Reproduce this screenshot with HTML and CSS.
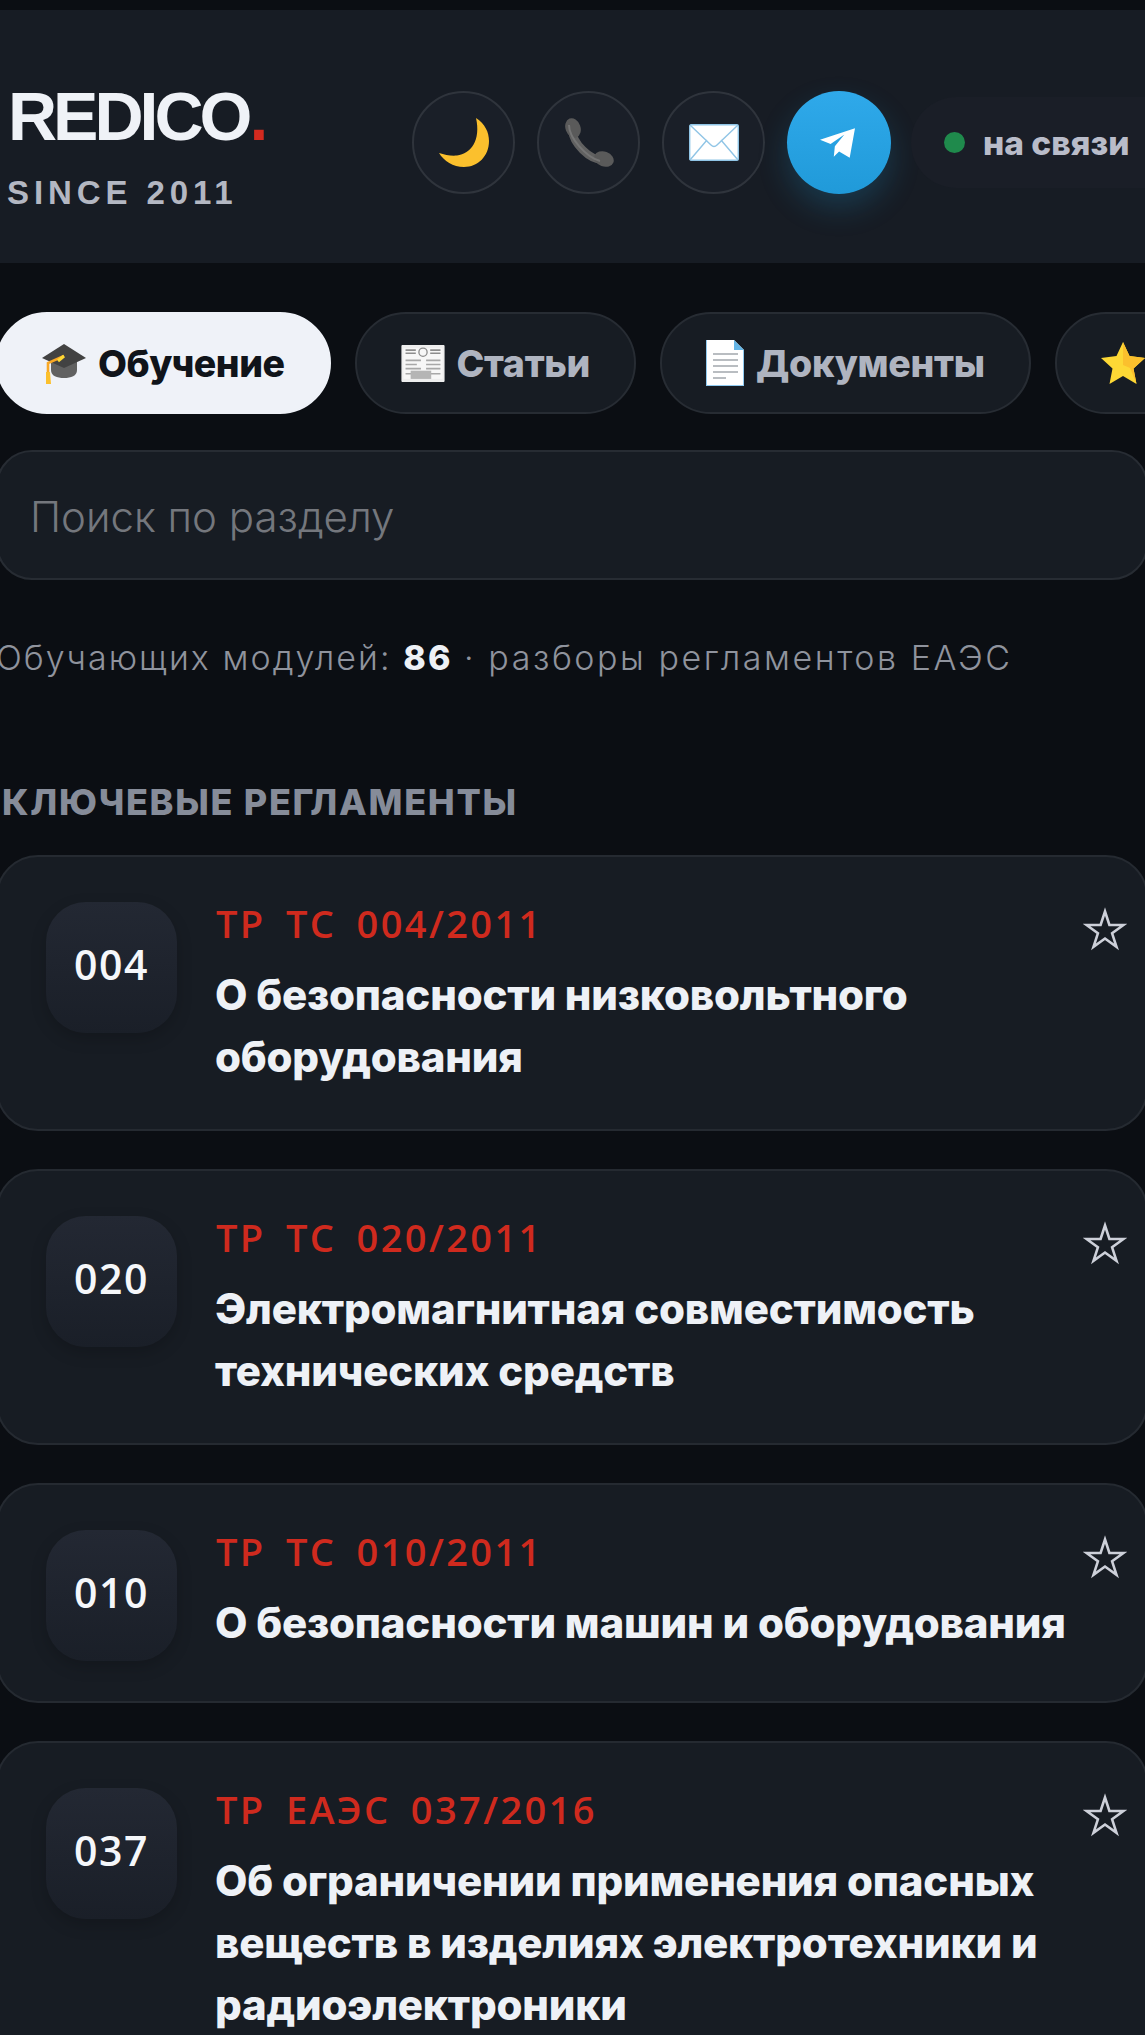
FILE: index.html
```html
<!DOCTYPE html>
<html lang="ru">
<head>
    <meta charset="UTF-8">
    <meta name="viewport" content="width=device-width, initial-scale=1.0">
    <title>REDICO</title>
    <link rel="stylesheet" href="styles.css">
</head>
<body>
    <div class="page">
        <header class="topbar">
            <div class="brand">
                <div class="logo">REDICO<span class="logo-dot">.</span></div>
                <div class="since">SINCE 2011</div>
            </div>
            <div class="actions">
                <button class="round-btn">
                    <svg width="50" height="49" viewBox="0 0 50 49"><path d="M37 0C46 6 50 14 50 23C50 38 39 49 25 49C14 49 5 43 0 35C6 37 12 38 18 37.500C32 36 42 22 37 0Z" fill="#fbc02d"/></svg>
                </button>
                <button class="round-btn">
                    <svg width="50" height="50" viewBox="0 0 50 50"><path d="M8 12C9 25 25 42 39 42" fill="none" stroke="#616161" stroke-width="8"/><ellipse cx="9" cy="10" rx="7.500" ry="10" transform="rotate(-20 9 10)" fill="#5a5a5a"/><ellipse cx="40" cy="41" rx="10" ry="7.500" transform="rotate(20 40 41)" fill="#5a5a5a"/><path d="M5 7C5 20 22 39 36 43" fill="none" stroke="#757575" stroke-width="2"/></svg>
                </button>
                <button class="round-btn">
                    <svg width="50" height="37" viewBox="0 0 50 37"><rect x="0.700" y="0.700" width="48.600" height="35.600" rx="1.500" fill="#ffffff" stroke="#90c5e6" stroke-width="1.400"/><path d="M1 1L22 21Q25 24 28 21L49 1M1 36L18 16M49 36L32 16" fill="none" stroke="#90c5e6" stroke-width="1.400"/></svg>
                </button>
                <button class="round-btn round-btn-tg">
                    <svg width="35" height="30" viewBox="0 0 33 28"><path d="M33 0L0 11L10 15L23 6L14 17L13 27L18 22L28 28Z" fill="#ffffff"/></svg>
                </button>
                <div class="status"><span class="status-dot"></span>на связи</div>
            </div>
        </header>

        <main class="content">
            <nav class="tabs">
                <a class="tab tab-active">
                    <svg width="44" height="44" viewBox="0 0 44 44"><path d="M9 18V29C9 35 15 37 22 37C29 37 35 35 35 29V18Z" fill="#616161"/><path d="M22 3L44 17L22 27L0 17Z" fill="#424242"/><path d="M22 15L6 22V32" fill="none" stroke="#f9a825" stroke-width="2.600"/><path d="M22 15L16 20" stroke="#fdd835" stroke-width="3"/><path d="M4 31H8L9 43H4Z" fill="#fbc02d"/></svg>
                    Обучение
                </a>
                <a class="tab">
                    <svg width="44" height="37" viewBox="0 0 42 36"><rect width="42" height="36" rx="1" fill="#eeeeee"/><rect x="2" y="3" width="38" height="30" fill="#f7f7f7"/><path d="M4 5H14M28 5H38M4 8H14M28 8H38" stroke="#8d8d8d" stroke-width="1.600"/><circle cx="21" cy="7" r="4" fill="none" stroke="#8d8d8d" stroke-width="1.300"/><path d="M4 15H19M4 19H15M4 23H19M24 15H38M24 19H38M24 23H38M4 28H10M24 28H38" stroke="#a8a8a8" stroke-width="1.600"/><rect x="9" y="25" width="20" height="8" fill="#b5b5b5"/></svg>
                    Статьи
                </a>
                <a class="tab">
                    <svg width="38" height="46" viewBox="0 0 38 46"><path d="M0 0H28L38 10V46H0Z" fill="#ffffff"/><path d="M28 0L38 10H28Z" fill="#64b5e6"/><path d="M0 0H1V45H37V10H38V46H0Z" fill="#90caf0"/><path d="M7 14H32M7 20H32M7 26H32M7 32H32M7 38H20" stroke="#a3a8ad" stroke-width="1.500"/></svg>
                    Документы
                </a>
                <a class="tab tab-cut">
                    <svg width="44" height="44" viewBox="0 0 44 44"><path d="M22 1L28.500 15L44 17L32.500 27.500L35.500 43L22 35L8.500 43L11.500 27.500L0 17L15.500 15Z" fill="#fdd835"/><path d="M22 1L28.500 15L44 17L32.500 27.500L35.500 43L29 27L22 24Z" fill="#fbc02d"/></svg>
                </a>
            </nav>

            <input class="search" type="text" placeholder="Поиск по разделу">

            <p class="summary">Обучающих модулей: <b>86</b> <span class="summary-tail">· разборы регламентов ЕАЭС</span></p>

            <h2 class="section-title">КЛЮЧЕВЫЕ РЕГЛАМЕНТЫ</h2>

            <div class="card-list">
                <article class="card">
                    <div class="card-num">004</div>
                    <div class="card-body">
                        <div class="card-code">ТР ТС 004/2011</div>
                        <div class="card-title">О безопасности низковольтного оборудования</div>
                    </div>
                    <svg class="card-star" viewBox="0 0 44 44"><path d="M22 4.500L26.400 18L40.500 18L29.100 26.300L33.500 39.800L22 31.500L10.500 39.800L14.900 26.300L3.500 18L17.600 18Z" fill="none" stroke="#cdd0d9" stroke-width="2.600" stroke-miterlimit="10"/></svg>
                </article>
                <article class="card">
                    <div class="card-num">020</div>
                    <div class="card-body">
                        <div class="card-code">ТР ТС 020/2011</div>
                        <div class="card-title">Электромагнитная совместимость технических средств</div>
                    </div>
                    <svg class="card-star" viewBox="0 0 44 44"><path d="M22 4.500L26.400 18L40.500 18L29.100 26.300L33.500 39.800L22 31.500L10.500 39.800L14.900 26.300L3.500 18L17.600 18Z" fill="none" stroke="#cdd0d9" stroke-width="2.600" stroke-miterlimit="10"/></svg>
                </article>
                <article class="card">
                    <div class="card-num">010</div>
                    <div class="card-body">
                        <div class="card-code">ТР ТС 010/2011</div>
                        <div class="card-title">О безопасности машин и оборудования</div>
                    </div>
                    <svg class="card-star" viewBox="0 0 44 44"><path d="M22 4.500L26.400 18L40.500 18L29.100 26.300L33.500 39.800L22 31.500L10.500 39.800L14.900 26.300L3.500 18L17.600 18Z" fill="none" stroke="#cdd0d9" stroke-width="2.600" stroke-miterlimit="10"/></svg>
                </article>
                <article class="card">
                    <div class="card-num">037</div>
                    <div class="card-body">
                        <div class="card-code">ТР ЕАЭС 037/2016</div>
                        <div class="card-title">Об ограничении применения опасных веществ в изделиях электротехники и радиоэлектроники</div>
                    </div>
                    <svg class="card-star" viewBox="0 0 44 44"><path d="M22 4.500L26.400 18L40.500 18L29.100 26.300L33.500 39.800L22 31.500L10.500 39.800L14.900 26.300L3.500 18L17.600 18Z" fill="none" stroke="#cdd0d9" stroke-width="2.600" stroke-miterlimit="10"/></svg>
                </article>
            </div>
        </main>
    </div>
</body>
</html>
```

FILE: styles.css
```css
* {
    box-sizing: border-box;
}
html, body {
    margin: 0;
    height: 2035px;
    overflow: hidden;
    background-color: #0b0e13;
}
body {
    font-family: Inter, "Noto Sans", sans-serif;
}
.page {
    width: 1145px;
    padding-top: 10px;
}

/* header */
.topbar {
    display: flex;
    justify-content: space-between;
    height: 253px;
    padding: 81px 0 0 8px;
    background-color: #171c24;
}
.logo {
    font-family: "Liberation Sans", Arial, sans-serif;
    font-size: 68px;
    font-weight: 700;
    line-height: 50px;
    letter-spacing: -4px;
    color: #eff2f7;
}
.logo-dot {
    color: #d32a1f;
    letter-spacing: 0;
    margin-left: 1px;
}
.since {
    margin: 40px 0 0 -1px;
    font-family: "Liberation Sans", Arial, sans-serif;
    font-size: 33px;
    font-weight: 700;
    line-height: 24px;
    letter-spacing: 4.900px;
    color: #b3b7c2;
}
.actions {
    display: flex;
    gap: 22px;
    align-items: flex-start;
    margin-right: -66px;
}
.round-btn {
    display: flex;
    align-items: center;
    justify-content: center;
    width: 103px;
    height: 103px;
    padding: 0;
    border: 2px solid #2f343c;
    border-radius: 50%;
    background-color: #1a1f28;
}
.round-btn-tg {
    width: 104px;
    padding-right: 4px;
    border: 0;
    background: linear-gradient(#2fa9ea, #209ad9);
    box-shadow: 0 14px 30px rgba(34, 158, 217, 0.22);
}
.status {
    display: flex;
    align-items: center;
    gap: 18px;
    width: 300px;
    height: 91px;
    margin: 6px 0 0 -2px;
    padding-left: 33px;
    border-radius: 46px;
    background-color: #1a1e27;
    font-size: 33.500px;
    font-weight: 800;
    color: #b9bcc9;
}
.status-dot {
    width: 21px;
    height: 21px;
    border-radius: 50%;
    background-color: #1f8a4c;
}

/* tabs and search */
.content {
    margin: 0 -3px 0 -4px;
    padding-top: 49px;
}
.tabs {
    display: flex;
    gap: 24px;
    width: 1400px;
}
.tab {
    display: flex;
    align-items: center;
    gap: 12px;
    flex: none;
    height: 102px;
    padding: 0 44px;
    border: 2px solid #272c33;
    border-radius: 51px;
    background-color: #171c23;
    font-size: 37.500px;
    font-weight: 800;
    letter-spacing: -0.300px;
    color: #afb4c0;
}
.tab-active {
    border-color: #eff2f8;
    background-color: #eff2f8;
    letter-spacing: -0.500px;
    color: #10141a;
}
.tab-cut {
    width: 240px;
}
.search {
    display: block;
    width: 100%;
    height: 130px;
    margin-top: 36px;
    padding: 2px 32px 0;
    border: 2px solid #272c33;
    border-radius: 36px;
    background-color: #171c23;
    font-family: Inter, sans-serif;
    font-size: 42px;
    font-weight: 300;
    color: #cdd0d9;
    outline: none;
}
.search::placeholder {
    color: #74777d;
}
.summary {
    margin: 56px 0 0;
    font-size: 34px;
    font-weight: 300;
    line-height: 44px;
    letter-spacing: 2.050px;
    color: #8f939d;
}
.summary b {
    font-weight: 800;
    color: #eef1f6;
}
.summary-tail {
    letter-spacing: 2.550px;
}
.section-title {
    margin: 100px 0 0 6px;
    font-size: 36px;
    font-weight: 800;
    line-height: 44px;
    letter-spacing: 1.700px;
    color: #868c99;
}

/* regulation cards */
.card-list {
    display: flex;
    flex-direction: column;
    gap: 38px;
    margin-top: 31px;
}
.card {
    display: flex;
    align-items: flex-start;
    gap: 38px;
    padding: 45px 19px 40px 48px;
    border: 2px solid #252a31;
    border-radius: 42px;
    background-color: #171c23;
}
.card-num {
    display: flex;
    flex: none;
    align-items: center;
    justify-content: center;
    width: 131px;
    height: 131px;
    padding-bottom: 8px;
    border-radius: 40px;
    background: linear-gradient(#232833, #1a1f28);
    box-shadow: 0 6px 16px rgba(0, 0, 0, 0.18);
    font-family: "Open Sans", sans-serif;
    font-size: 41px;
    font-weight: 600;
    letter-spacing: 1.500px;
    color: #f5f7fa;
}
.card-body {
    flex: 1;
    min-width: 0;
    margin: -2px 0 1px;
}
.card-code {
    margin-left: 1px;
    font-family: "Open Sans", sans-serif;
    font-size: 38px;
    font-weight: 600;
    line-height: 46px;
    letter-spacing: 2.400px;
    word-spacing: 8px;
    color: #cf2a1e;
}
.card-title {
    margin-top: 18px;
    font-size: 42px;
    font-weight: 800;
    line-height: 62px;
    letter-spacing: -0.200px;
    color: #eef1f6;
}
.card-star {
    flex: none;
    width: 44px;
    height: 44px;
    margin: 5px 0 0 -30px;
}
```
